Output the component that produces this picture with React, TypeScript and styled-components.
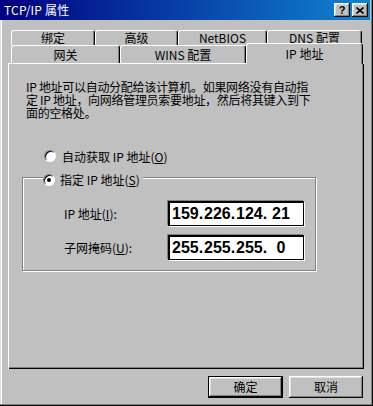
import React from 'react'
import styled, { createGlobalStyle } from 'styled-components'

const GlobalStyle = createGlobalStyle`
  html, body {
    margin: 0;
    padding: 0;
    background: #c0c0c0;
  }
  body {
    font-family: "Noto Sans CJK SC", "Liberation Sans", sans-serif;
    font-size: 12px;
    color: #000;
  }
`

const Window = styled.div`
  width: 373px;
  height: 406px;
  box-sizing: border-box;
  padding: 0 3px 3px 2px;
  background: #c0c0c0;
  display: flex;
  flex-direction: column;
  box-shadow: inset -1px -1px #0a0a0a, inset -2px -2px #808080,
    inset 1px 0 #dfdfdf, inset 2px 0 #fff;
`

const TitleBar = styled.div`
  height: 20px;
  margin-left: -2px;
  padding: 0 2px 0 4px;
  display: flex;
  align-items: center;
  background: linear-gradient(90deg, #000080, #1084d0);
  color: #fff;
`

const TitleText = styled.span`
  line-height: 14px;
  letter-spacing: 0.2px;
`

const TitleButtons = styled.div`
  margin-left: auto;
  display: flex;
  gap: 2px;
`

const TitleButton = styled.button`
  width: 16px;
  height: 14px;
  padding: 0;
  border: none;
  background: #c0c0c0;
  display: flex;
  align-items: center;
  justify-content: center;
  font: bold 11px "Liberation Sans", sans-serif;
  color: #000;
  box-shadow: inset -1px -1px #0a0a0a, inset 1px 1px #fff,
    inset -2px -2px #808080, inset 2px 2px #dfdfdf;
`

const Body = styled.div`
  flex: 1;
  padding: 10px 6px 0 6px;
  display: flex;
  flex-direction: column;
`

const TabRow = styled.div<{ $h: number }>`
  height: ${(p) => p.$h}px;
  margin-left: 3px;
  display: flex;
`

const Tab = styled.div<{ $w: number; $active?: boolean }>`
  width: ${(p) => p.$w}px;
  box-sizing: border-box;
  background: #c0c0c0;
  display: flex;
  align-items: center;
  justify-content: center;
  line-height: 14px;
  border-top: 1px solid #fff;
  border-left: 1px solid #fff;
  border-right: 1px solid #000;
  border-radius: 3px 3px 0 0;
  box-shadow: inset -1px 0 #808080;
  ${(p) =>
    p.$active &&
    `
    position: relative;
    z-index: 1;
    margin-top: -2px;
    margin-bottom: -1px;
  `}
`

const Panel = styled.div`
  height: 306px;
  box-sizing: border-box;
  padding: 17px 0 0 18px;
  box-shadow: inset 1px 1px #fff, inset -1px -1px #000,
    inset -2px -2px #808080;
`

const Description = styled.p`
  margin: 0;
  line-height: 13px;
  letter-spacing: -0.3px;
  white-space: nowrap;
`

const RadioRow = styled.div`
  display: flex;
  align-items: center;
  gap: 6px;
  height: 14px;
  margin: 30px 0 0 18px;
`

const Radio = styled.span<{ $checked?: boolean }>`
  width: 12px;
  height: 12px;
  box-sizing: border-box;
  border-radius: 50%;
  background: #fff;
  border: 1px solid;
  border-color: #808080 #fff #fff #808080;
  box-shadow: inset 1px 1px #000;
  display: flex;
  align-items: center;
  justify-content: center;
  flex-shrink: 0;

  &::after {
    content: '';
    width: 4px;
    height: 4px;
    border-radius: 50%;
    background: ${(p) => (p.$checked ? '#000' : 'transparent')};
  }
`

const Group = styled.fieldset`
  width: 294px;
  box-sizing: border-box;
  margin: 5px 0 0 -4px;
  padding: 14px 0 10px 0;
  border: 1px solid #808080;
  box-shadow: 1px 1px 0 #fff, inset 1px 1px 0 #fff;
  display: flex;
  flex-direction: column;
  gap: 9px;
`

const Legend = styled.legend`
  margin-left: 20px;
  padding: 0 3px 0 0;
  background: #c0c0c0;
`

const LegendInner = styled.span`
  display: inline-flex;
  align-items: center;
  gap: 5px;
  height: 14px;
  line-height: 14px;
`

const FieldRow = styled.div`
  display: flex;
  align-items: center;
  padding-left: 41px;
`

const FieldLabel = styled.span`
  width: 104px;
  line-height: 14px;
`

const IpBox = styled.div`
  width: 136px;
  height: 25px;
  box-sizing: border-box;
  padding-left: 3px;
  background: #fff;
  border: 1px solid #000;
  box-shadow: inset 1px 1px #000, 1px 1px 0 #fff, -1px -1px 0 #808080;
  display: flex;
  align-items: center;
  font: bold 16px "Liberation Sans", sans-serif;
  line-height: 21px;
`

const Octet = styled.span`
  width: 26px;
  text-align: center;
`

const Dot = styled.span`
  width: 6px;
  text-align: center;
`

const ButtonRow = styled.div`
  margin-top: 7px;
  padding-right: 1px;
  display: flex;
  justify-content: flex-end;
  gap: 6px;
`

const Button = styled.button<{ $w: number; $default?: boolean }>`
  width: ${(p) => p.$w}px;
  height: 22px;
  padding: 0;
  border: none;
  background: #c0c0c0;
  font: inherit;
  line-height: 14px;
  color: #000;
  box-shadow: ${(p) =>
    p.$default
      ? 'inset -1px -1px #000, inset 1px 1px #000, inset -2px -2px #0a0a0a, inset 2px 2px #fff, inset -3px -3px #808080, inset 3px 3px #dfdfdf'
      : 'inset -1px -1px #0a0a0a, inset 1px 1px #fff, inset -2px -2px #808080, inset 2px 2px #dfdfdf'};
`

const IpValue = ({ parts }: { parts: string[] }) => (
  <IpBox>
    {parts.map((p, i) => (
      <React.Fragment key={i}>
        {i > 0 && <Dot>.</Dot>}
        <Octet>{p}</Octet>
      </React.Fragment>
    ))}
  </IpBox>
)

export default function App() {
  return (
    <Window>
      <GlobalStyle />
      <TitleBar>
        <TitleText>TCP/IP 属性</TitleText>
        <TitleButtons>
          <TitleButton>?</TitleButton>
          <TitleButton>
            <svg width="8" height="7" viewBox="0 0 8 7">
              <path d="M0.5 0.5 L7.5 6.5 M7.5 0.5 L0.5 6.5" stroke="#000" strokeWidth="1.6" />
            </svg>
          </TitleButton>
        </TitleButtons>
      </TitleBar>
      <Body>
        <TabRow $h={15}>
          <Tab $w={84}>绑定</Tab>
          <Tab $w={83}>高级</Tab>
          <Tab $w={89}>NetBIOS</Tab>
          <Tab $w={95}>DNS 配置</Tab>
        </TabRow>
        <TabRow $h={18}>
          <Tab $w={109}>网关</Tab>
          <Tab $w={126}>WINS 配置</Tab>
          <Tab $w={117} $active>IP 地址</Tab>
        </TabRow>
        <Panel>
          <Description>
            IP 地址可以自动分配给该计算机。如果网络没有自动指
            <br />
            定 IP 地址，向网络管理员索要地址，然后将其键入到下
            <br />
            面的空格处。
          </Description>
          <RadioRow>
            <Radio />
            <span>自动获取 IP 地址(<u>O</u>)</span>
          </RadioRow>
          <Group>
            <Legend>
              <LegendInner>
                <Radio $checked />
                <span>指定 IP 地址(<u>S</u>)</span>
              </LegendInner>
            </Legend>
            <FieldRow>
              <FieldLabel>IP 地址(<u>I</u>):</FieldLabel>
              <IpValue parts={['159', '226', '124', '21']} />
            </FieldRow>
            <FieldRow>
              <FieldLabel>子网掩码(<u>U</u>):</FieldLabel>
              <IpValue parts={['255', '255', '255', '0']} />
            </FieldRow>
          </Group>
        </Panel>
        <ButtonRow>
          <Button $w={75} $default>确定</Button>
          <Button $w={74}>取消</Button>
        </ButtonRow>
      </Body>
    </Window>
  )
}
